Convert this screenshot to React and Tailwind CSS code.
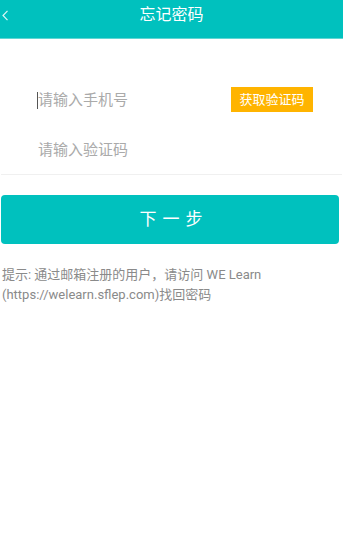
import React from "react";

const font = { fontFamily: 'Roboto, "Noto Sans CJK SC", sans-serif' };

export default function App() {
  return (
    <div className="w-[343px] h-[556px] bg-white" style={font}>
      {/* Header */}
      <div className="relative h-[39px] bg-[#00c1be] border-b border-[#5fd6d3] flex items-center justify-center">
        <svg
          className="absolute left-[2px] top-[10px]"
          width="7"
          height="11"
          viewBox="0 0 7 11"
          fill="none"
        >
          <path d="M5.5 0.8 L1 5.5 L5.5 10.2" stroke="#d9f7f6" strokeWidth="1.2" />
        </svg>
        <span className="text-white text-[16px] leading-none mt-[-8px]">忘记密码</span>
      </div>

      {/* Form */}
      <div className="pt-[49px]">
        <div className="flex items-center justify-between h-[25px] pl-[37px] pr-[30px]">
          <div className="flex items-center">
            <span className="w-px h-[17px] bg-[#555]" />
            <span className="text-[15px] text-[#aaa] leading-none">请输入手机号</span>
          </div>
          <button className="w-[82px] h-[25px] bg-[#ffb400] text-white text-[13px] leading-none mt-[-2px]">
            获取验证码
          </button>
        </div>
        <div className="h-[25px] mt-[25px] pl-[38px] flex items-center">
          <span className="text-[15px] text-[#aaa] leading-none">请输入验证码</span>
        </div>
        <div className="mt-[11px] mx-[1px] h-px bg-[#f0f0f0]" />
      </div>

      {/* Button */}
      <div className="px-[1px] pt-[20px]">
        <button className="w-[338px] h-[49px] rounded-[4px] bg-[#00c1be] text-white text-[17px] tracking-[6px] pl-[8px] flex items-center justify-center">
          下一步
        </button>
      </div>

      {/* Hint */}
      <p className="px-[2px] pt-[21px] text-[13px] leading-[20px] text-[#8a8a8a]">
        提示: 通过邮箱注册的用户，请访问 WE Learn (https://welearn.sflep.com)找回密码
      </p>
    </div>
  );
}
